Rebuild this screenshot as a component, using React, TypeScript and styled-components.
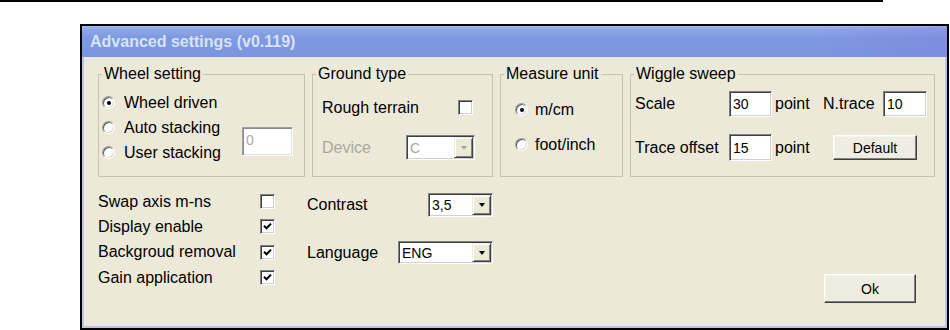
import React from "react";
import styled, { createGlobalStyle } from "styled-components";

const Global = createGlobalStyle`
  html, body { margin: 0; padding: 0; background: #fff; }
  body { font-family: "Liberation Sans", Arial, sans-serif; font-size: 16px; color: #000; }
  * { box-sizing: border-box; }
`;

const Page = styled.div`
  width: 950px;
  height: 330px;
  overflow: hidden;
`;

const TopRule = styled.div`
  width: 883px;
  height: 2px;
  background: #000;
`;

const Window = styled.div`
  margin: 22px 0 0 80px;
  width: 869px;
  height: 306px;
  border: 2px solid #000;
  display: flex;
  flex-direction: column;
  background: #ece9d8;
`;

const TitleBar = styled.div`
  height: 31px;
  flex: none;
  display: flex;
  align-items: center;
  padding-left: 8px;
  background:
    linear-gradient(to right, rgba(0, 0, 0, 0) 84%, rgba(128, 120, 220, 0.35) 100%),
    linear-gradient(to bottom, #aabcef 0, #8fa7e8 3px, #7e99e1 12px, #7a96df 100%);
`;

const Title = styled.span`
  font-weight: bold;
  font-size: 16px;
  color: #d8e2f8;
`;

const Client = styled.div`
  flex: 1;
  display: flex;
  flex-direction: column;
  border: 2px solid #b8c3ef;
  border-top: none;
`;

const GroupRow = styled.div`
  display: flex;
  gap: 7px;
  padding: 8px 0 0 14px;
`;

const Group = styled.fieldset<{ $w: number }>`
  width: ${(p) => p.$w}px;
  height: 112px;
  margin: 0;
  padding: 0;
  min-width: 0;
  border: 1px solid #c6c3b3;
`;

const Legend = styled.legend`
  margin-left: 3px;
  padding: 0 2px;
  line-height: 18px;
  font-size: 16px;
`;

const WheelGrid = styled.div`
  display: grid;
  grid-template-columns: 140px 51px;
  grid-template-rows: repeat(3, 25px);
  padding: 7px 0 0 3px;
`;

const RadioItem = styled.label<{ $gap?: number; $row?: number }>`
  display: flex;
  align-items: center;
  gap: ${(p) => p.$gap ?? 9}px;
  white-space: nowrap;
  ${(p) => (p.$row ? `grid-row: ${p.$row}; grid-column: 1;` : "")}
`;

const RadioCircle = styled.span<{ $on?: boolean }>`
  position: relative;
  width: 13px;
  height: 13px;
  flex: none;
  border-radius: 50%;
  background: #fff;
  border: 1px solid;
  border-color: #9a9a9a #fff #fff #9a9a9a;
  box-shadow: inset 1px 1px 0 #5a5a5a, inset -1px -1px 0 #dcd8cc;
  &::after {
    content: "";
    display: ${(p) => (p.$on ? "block" : "none")};
    position: absolute;
    left: 3.5px;
    top: 3.5px;
    width: 4px;
    height: 4px;
    border-radius: 50%;
    background: #000;
  }
`;

const Sunken = styled.div<{ $w: number; $h: number }>`
  width: ${(p) => p.$w}px;
  height: ${(p) => p.$h}px;
  background: #fff;
  border: 1px solid;
  border-color: #808080 #fff #fff #808080;
  box-shadow: inset 1px 1px 0 #404040, inset -1px -1px 0 #d4d0c8;
  display: flex;
  align-items: center;
  padding: 0 3px;
  font-size: 14px;
`;

const FieldText = styled.span<{ $dim?: boolean }>`
  flex: 1;
  color: ${(p) => (p.$dim ? "#aca899" : "#000")};
  white-space: nowrap;
  overflow: hidden;
`;

const WheelBox = styled(Sunken)`
  grid-column: 2;
  grid-row: 2 / span 2;
  align-self: center;
  margin-top: 2px;
  align-items: flex-start;
  padding-top: 4px;
  border-color: #a0a0a0 #fff #fff #a0a0a0;
  box-shadow: inset 1px 1px 0 #8a8a8a, inset -1px -1px 0 #e4e2d8;
`;

const DropButton = styled.span<{ $dim?: boolean }>`
  width: 19px;
  align-self: stretch;
  margin: 1px -2px 1px 0;
  flex: none;
  display: flex;
  align-items: center;
  justify-content: center;
  background: #ece9d8;
  border: 1px solid;
  border-color: #ece9d8 #404040 #404040 #ece9d8;
  box-shadow: inset 1px 1px 0 #fff, inset -1px -1px 0 #808080;
  &::after {
    content: "";
    border-left: 3.5px solid transparent;
    border-right: 3.5px solid transparent;
    border-top: 4px solid ${(p) => (p.$dim ? "#aca899" : "#000")};
  }
`;

const GroundGrid = styled.div`
  display: grid;
  grid-template-columns: 84px 1fr;
  grid-template-rows: 25px 25px;
  row-gap: 15px;
  align-items: center;
  padding: 12px 0 0 9px;
`;

const Label = styled.span<{ $dim?: boolean }>`
  color: ${(p) => (p.$dim ? "#aca899" : "#000")};
  white-space: nowrap;
`;

const CheckBox = styled.span<{ $ml?: number }>`
  width: 15px;
  height: 15px;
  flex: none;
  margin-left: ${(p) => p.$ml ?? 0}px;
  background: #fff;
  border: 1px solid;
  border-color: #808080 #fff #fff #808080;
  box-shadow: inset 1px 1px 0 #404040, inset -1px -1px 0 #d4d0c8;
  display: flex;
  align-items: center;
  justify-content: center;
`;

const MeasureCol = styled.div`
  display: flex;
  flex-direction: column;
  gap: 10px;
  padding: 14px 0 0 14px;
  & > * {
    height: 25px;
  }
`;

const WiggleGrid = styled.div`
  display: grid;
  grid-template-columns: 94px 43px 51px 60px 44px;
  grid-template-rows: 26px 27px;
  row-gap: 17px;
  align-items: center;
  padding: 8px 0 0 4px;
`;

const Unit = styled.span`
  padding-left: 3px;
`;

const RaisedButton = styled.button<{ $w: number; $h: number }>`
  width: ${(p) => p.$w}px;
  height: ${(p) => p.$h}px;
  padding: 0;
  font-family: "Liberation Sans", Arial, sans-serif;
  font-size: 14px;
  color: #000;
  background: #efede2;
  border: 1px solid;
  border-color: #fff #404040 #404040 #fff;
  box-shadow: inset -1px -1px 0 #808080, inset 1px 1px 0 #f6f5ee;
`;

const DefaultButton = styled(RaisedButton)`
  grid-column: 4 / span 2;
  margin-left: 10px;
`;

const BottomRow = styled.div`
  flex: 1;
  display: flex;
  padding: 12px 29px 23px 14px;
`;

const CheckList = styled.div`
  display: grid;
  grid-template-columns: 162px 15px;
  grid-auto-rows: 25.3px;
  align-items: center;
  align-content: start;
`;

const MiddleCol = styled.div`
  margin-left: 32px;
  width: 186px;
  padding-top: 4px;
  display: flex;
  flex-direction: column;
  gap: 24px;
`;

const ComboRow = styled.div<{ $h: number }>`
  height: ${(p) => p.$h}px;
  display: flex;
  align-items: center;
  justify-content: space-between;
`;

const OkButton = styled(RaisedButton)`
  margin-left: auto;
  align-self: flex-end;
`;

const Check = () => (
  <svg width="9" height="9" viewBox="0 0 9 9">
    <path d="M1 3.8 L3.5 6.3 L8 1.6" fill="none" stroke="#000" strokeWidth="2" />
  </svg>
);

const Combo = ({ w, h, value, dim }: { w: number; h: number; value: string; dim?: boolean }) => (
  <Sunken $w={w} $h={h}>
    <FieldText $dim={dim}>{value}</FieldText>
    <DropButton $dim={dim} />
  </Sunken>
);

export default function App() {
  return (
    <Page>
      <Global />
      <TopRule />
      <Window>
        <TitleBar>
          <Title>Advanced settings (v0.119)</Title>
        </TitleBar>
        <Client>
          <GroupRow>
            <Group $w={207}>
              <Legend>Wheel setting</Legend>
              <WheelGrid>
                <RadioItem $row={1}>
                  <RadioCircle $on />
                  Wheel driven
                </RadioItem>
                <RadioItem $row={2}>
                  <RadioCircle />
                  Auto stacking
                </RadioItem>
                <RadioItem $row={3}>
                  <RadioCircle />
                  User stacking
                </RadioItem>
                <WheelBox $w={51} $h={29}>
                  <FieldText $dim>0</FieldText>
                </WheelBox>
              </WheelGrid>
            </Group>
            <Group $w={181}>
              <Legend>Ground type</Legend>
              <GroundGrid>
                <Label>Rough terrain</Label>
                <CheckBox $ml={52} />
                <Label $dim>Device</Label>
                <Combo w={69} h={25} value="C" dim />
              </GroundGrid>
            </Group>
            <Group $w={123}>
              <Legend>Measure unit</Legend>
              <MeasureCol>
                <RadioItem $gap={7}>
                  <RadioCircle $on />
                  m/cm
                </RadioItem>
                <RadioItem $gap={7}>
                  <RadioCircle />
                  foot/inch
                </RadioItem>
              </MeasureCol>
            </Group>
            <Group $w={305}>
              <Legend>Wiggle sweep</Legend>
              <WiggleGrid>
                <Label>Scale</Label>
                <Sunken $w={43} $h={26}>
                  <FieldText>30</FieldText>
                </Sunken>
                <Unit>point</Unit>
                <Label>N.trace</Label>
                <Sunken $w={44} $h={26}>
                  <FieldText>10</FieldText>
                </Sunken>
                <Label>Trace offset</Label>
                <Sunken $w={43} $h={27}>
                  <FieldText>15</FieldText>
                </Sunken>
                <Unit>point</Unit>
                <DefaultButton $w={84} $h={25}>
                  Default
                </DefaultButton>
              </WiggleGrid>
            </Group>
          </GroupRow>
          <BottomRow>
            <CheckList>
              <Label>Swap axis m-ns</Label>
              <CheckBox />
              <Label>Display enable</Label>
              <CheckBox>
                <Check />
              </CheckBox>
              <Label>Backgroud removal</Label>
              <CheckBox>
                <Check />
              </CheckBox>
              <Label>Gain application</Label>
              <CheckBox>
                <Check />
              </CheckBox>
            </CheckList>
            <MiddleCol>
              <ComboRow $h={24}>
                <Label>Contrast</Label>
                <Combo w={65} h={24} value="3,5" />
              </ComboRow>
              <ComboRow $h={23}>
                <Label>Language</Label>
                <Combo w={95} h={23} value="ENG" />
              </ComboRow>
            </MiddleCol>
            <OkButton $w={92} $h={29}>
              Ok
            </OkButton>
          </BottomRow>
        </Client>
      </Window>
    </Page>
  );
}
